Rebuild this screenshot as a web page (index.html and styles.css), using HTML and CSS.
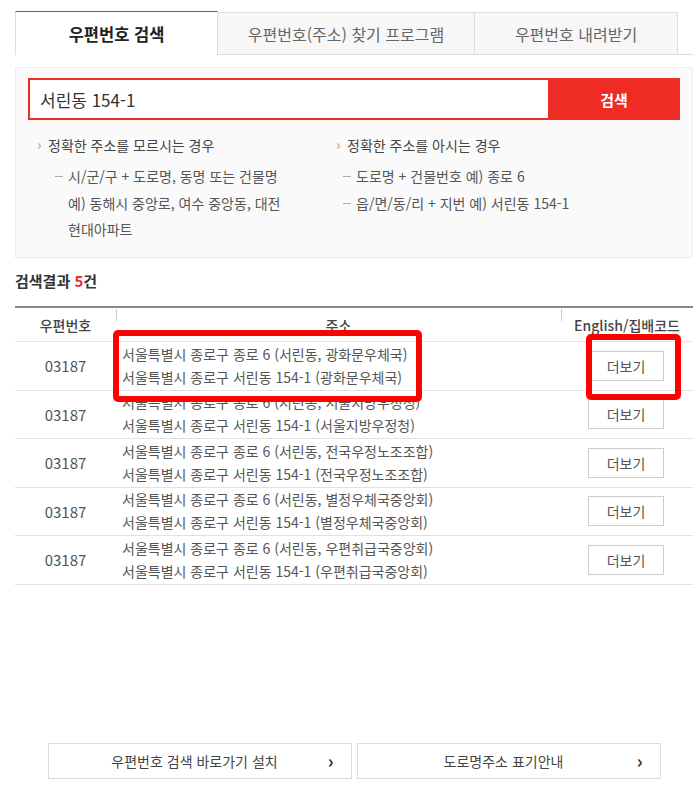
FILE: index.html
```html
<!DOCTYPE html>
<html lang="ko">
<head>
    <meta charset="UTF-8">
    <meta name="viewport" content="width=device-width, initial-scale=1.0">
    <title>우편번호 검색</title>
    <link rel="stylesheet" href="styles.css">
</head>
<body>
    <div class="wrap">
        <!-- 탭 메뉴 -->
        <ul class="tabs">
            <li class="tab active">우편번호 검색</li>
            <li class="tab wide">우편번호(주소) 찾기 프로그램</li>
            <li class="tab">우편번호 내려받기</li>
        </ul>

        <!-- 검색 영역 -->
        <div class="search-box">
            <div class="search-row">
                <input type="text" class="search-input" value="서린동 154-1">
                <button class="search-btn">검색</button>
            </div>
            <div class="hints">
                <div class="hint-col">
                    <p class="hint-title">정확한 주소를 모르시는 경우</p>
                    <ul class="hint-list">
                        <li>시/군/구 + 도로명, 동명 또는 건물명<br>예) 동해시 중앙로, 여수 중앙동, 대전<br>현대아파트</li>
                    </ul>
                </div>
                <div class="hint-col">
                    <p class="hint-title">정확한 주소를 아시는 경우</p>
                    <ul class="hint-list">
                        <li>도로명 + 건물번호 예) 종로 6</li>
                        <li>읍/면/동/리 + 지번 예) 서린동 154-1</li>
                    </ul>
                </div>
            </div>
        </div>

        <h2 class="result-title">검색결과 <em>5</em>건</h2>

        <!-- 결과 테이블 -->
        <div class="result">
            <table class="result-table">
                <colgroup>
                    <col class="col-zip">
                    <col class="col-addr">
                    <col class="col-more">
                </colgroup>
                <thead>
                    <tr>
                        <th>우편번호</th>
                        <th class="sep">주소</th>
                        <th class="sep">English/집배코드</th>
                    </tr>
                </thead>
                <tbody>
                    <tr>
                        <td class="zip">03187</td>
                        <td class="addr">서울특별시 종로구 종로 6 (서린동, 광화문우체국)<br>서울특별시 종로구 서린동 154-1 (광화문우체국)</td>
                        <td class="more"><button class="more-btn">더보기</button></td>
                    </tr>
                    <tr>
                        <td class="zip">03187</td>
                        <td class="addr">서울특별시 종로구 종로 6 (서린동, 서울지방우정청)<br>서울특별시 종로구 서린동 154-1 (서울지방우정청)</td>
                        <td class="more"><button class="more-btn">더보기</button></td>
                    </tr>
                    <tr>
                        <td class="zip">03187</td>
                        <td class="addr">서울특별시 종로구 종로 6 (서린동, 전국우정노조조합)<br>서울특별시 종로구 서린동 154-1 (전국우정노조조합)</td>
                        <td class="more"><button class="more-btn">더보기</button></td>
                    </tr>
                    <tr>
                        <td class="zip">03187</td>
                        <td class="addr">서울특별시 종로구 종로 6 (서린동, 별정우체국중앙회)<br>서울특별시 종로구 서린동 154-1 (별정우체국중앙회)</td>
                        <td class="more"><button class="more-btn">더보기</button></td>
                    </tr>
                    <tr>
                        <td class="zip">03187</td>
                        <td class="addr">서울특별시 종로구 종로 6 (서린동, 우편취급국중앙회)<br>서울특별시 종로구 서린동 154-1 (우편취급국중앙회)</td>
                        <td class="more"><button class="more-btn">더보기</button></td>
                    </tr>
                </tbody>
            </table>

            <!-- 강조 표시 -->
            <div class="mark mark-addr"></div>
            <div class="mark mark-btn"></div>
        </div>

        <!-- 하단 링크 -->
        <div class="bottom-links">
            <a class="link-btn" href="#">우편번호 검색 바로가기 설치 <span class="arrow">›</span></a>
            <a class="link-btn" href="#">도로명주소 표기안내 <span class="arrow">›</span></a>
        </div>
    </div>
</body>
</html>
```

FILE: styles.css
```css
:root {
    --red: #ee2b24;
    --line: #dddddd;
    --text: #555555;
    --dark: #222222;
}

* {
    margin: 0;
    padding: 0;
    box-sizing: border-box;
    font-family: "Noto Sans CJK KR", "Noto Sans", sans-serif;
}

body {
    background: #fff;
    color: var(--text);
}

ul {
    list-style: none;
}

.wrap {
    width: 678px;
    margin-left: 15px;
    padding-top: 11px;
}

/* 탭 */
.tabs {
    display: flex;
    height: 44px;
    border-bottom: 1px solid var(--line);
}

.tab {
    width: 203px;
    display: flex;
    align-items: center;
    justify-content: center;
    font-size: 16px;
    color: #666;
    background: #f7f7f7;
    border: 1px solid var(--line);
    border-left: none;
    border-bottom: none;
    margin-top: 1px;
}

.tab.wide {
    width: 257px;
}

.tab.active {
    background: #fff;
    color: var(--dark);
    font-size: 16.5px;
    font-weight: bold;
    border-top: 1px solid var(--red);
    border-left: 1px solid var(--line);
    margin-top: 0;
    margin-bottom: -1px;
}

/* 검색 */
.search-box {
    margin-top: 12px;
    background: #fafafa;
    border: 1px solid #eeeeee;
    padding: 10px 12px 14px 12px;
}

.search-row {
    display: flex;
    height: 42px;
}

.search-input {
    flex: 1;
    border: 2px solid var(--red);
    border-right: none;
    padding: 0 10px;
    font-size: 17px;
    color: #333;
    outline: none;
    background: #fff;
}

.search-btn {
    width: 132px;
    border: none;
    background: var(--red);
    color: #fff;
    font-size: 15px;
    font-weight: bold;
}

.hints {
    display: flex;
    margin-top: 14px;
}

.hint-col {
    width: 300px;
    padding-left: 9px;
}

.hint-col + .hint-col {
    padding-left: 8px;
}

.hint-title {
    position: relative;
    padding-left: 11px;
    font-size: 14px;
    color: #444;
    line-height: 22px;
}

.hint-title::before {
    content: "›";
    position: absolute;
    left: 0;
    top: -1px;
    color: #d9a272;
    font-weight: bold;
}

.hint-list {
    margin-top: 7px;
}

.hint-list li {
    position: relative;
    padding-left: 31px;
    font-size: 14px;
    line-height: 26.5px;
    color: #555;
}

.hint-list li::before {
    content: "";
    position: absolute;
    left: 18px;
    top: 13px;
    width: 8px;
    height: 1px;
    background: #aaa;
}

.hint-col + .hint-col .hint-list li {
    padding-left: 20px;
}

.hint-col + .hint-col .hint-list li::before {
    left: 7px;
}

/* 결과 */
.result-title {
    margin-top: 12px;
    font-size: 15px;
    font-weight: bold;
    color: #333;
    line-height: 22px;
}

.result-title em {
    font-style: normal;
    color: var(--red);
}

.result {
    position: relative;
    margin-top: 14px;
}

.result-table {
    width: 100%;
    border-collapse: collapse;
    border-top: 2px solid #888;
}

.col-zip { width: 101px; }
.col-more { width: 132px; }

.result-table th {
    position: relative;
    height: 35px;
    font-size: 14px;
    font-weight: 500;
    color: #444;
    border-bottom: 1px solid #e5e5e5;
    padding-top: 2px;
}

.result-table th.sep::before {
    content: "";
    position: absolute;
    left: 0;
    top: 1px;
    width: 1px;
    height: 12px;
    background: #ccc;
}

.result-table td {
    height: 48.5px;
    border-bottom: 1px solid #e0e0e0;
}

.zip {
    text-align: center;
    font-size: 15px;
    color: var(--text);
}

.addr {
    padding-left: 6px;
    font-size: 14px;
    line-height: 23px;
    color: var(--text);
}

.more {
    padding-left: 27px;
}

.more-btn {
    width: 76px;
    height: 30px;
    border: 1px solid #cccccc;
    background: #fff;
    font-size: 14px;
    color: var(--text);
}

/* 강조 박스 */
.mark {
    position: absolute;
    border: 6px solid #ff0000;
    border-radius: 5px;
}

.mark-addr {
    left: 98px;
    top: 24px;
    width: 309px;
    height: 72px;
}

.mark-btn {
    left: 571px;
    top: 28px;
    width: 95px;
    height: 66px;
}

/* 하단 */
.bottom-links {
    display: flex;
    justify-content: center;
    gap: 5px;
    margin-top: 158px;
}

.link-btn {
    position: relative;
    width: 304px;
    height: 36px;
    display: flex;
    align-items: center;
    justify-content: center;
    padding-right: 10px;
    border: 1px solid var(--line);
    font-size: 14px;
    color: #444;
    text-decoration: none;
}

.link-btn .arrow {
    position: absolute;
    right: 17px;
    top: 50%;
    transform: translateY(-55%);
    font-size: 18px;
    line-height: 1;
    font-weight: bold;
    color: #333;
}
```
